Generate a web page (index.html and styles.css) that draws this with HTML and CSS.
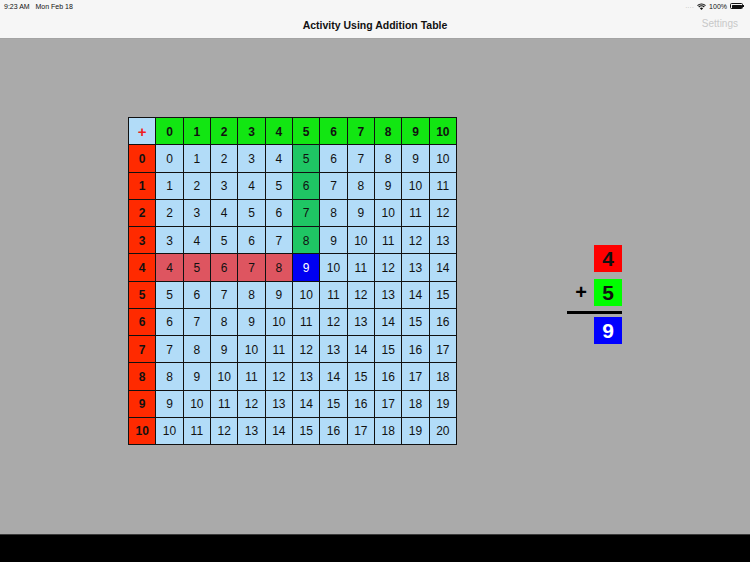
FILE: index.html
```html
<!DOCTYPE html>
<html>
<head>
<meta charset="utf-8">
<link rel="stylesheet" href="styles.css">
</head>
<body>
<div class="screen">
  <header class="topbar">
    <div class="status">
      <span class="time">9:23 AM&nbsp;&nbsp; Mon Feb 18</span>
      <span class="sys">
        <span class="dots">....</span>
        <svg class="wifi" width="9" height="7" viewBox="0 0 9 7"><path d="M4.5 7 L2.9 5.2 A2.4 2.4 0 0 1 6.1 5.2 Z" fill="#111"/><path d="M1.7 4 A4 4 0 0 1 7.3 4" stroke="#111" stroke-width="1.1" fill="none"/><path d="M0.5 2.6 A5.7 5.7 0 0 1 8.5 2.6" stroke="#111" stroke-width="1.1" fill="none"/></svg>
        <span class="pct">100%</span>
        <span class="battery"><span class="batfill"></span></span><span class="batnub"></span>
      </span>
    </div>
    <div class="navrow">
      <span class="title">Activity Using Addition Table</span>
      <span class="settings">Settings</span>
    </div>
  </header>
  <main class="stage">
    <div class="table">
      <div class="cell corner">+</div>
      <div class="cell top">0</div><div class="cell top">1</div><div class="cell top">2</div><div class="cell top">3</div><div class="cell top">4</div><div class="cell top">5</div><div class="cell top">6</div><div class="cell top">7</div><div class="cell top">8</div><div class="cell top">9</div><div class="cell top">10</div>

      <div class="cell side">0</div>
      <div class="cell">0</div><div class="cell">1</div><div class="cell">2</div><div class="cell">3</div><div class="cell">4</div><div class="cell col">5</div><div class="cell">6</div><div class="cell">7</div><div class="cell">8</div><div class="cell">9</div><div class="cell">10</div>

      <div class="cell side">1</div>
      <div class="cell">1</div><div class="cell">2</div><div class="cell">3</div><div class="cell">4</div><div class="cell">5</div><div class="cell col">6</div><div class="cell">7</div><div class="cell">8</div><div class="cell">9</div><div class="cell">10</div><div class="cell">11</div>

      <div class="cell side">2</div>
      <div class="cell">2</div><div class="cell">3</div><div class="cell">4</div><div class="cell">5</div><div class="cell">6</div><div class="cell col">7</div><div class="cell">8</div><div class="cell">9</div><div class="cell">10</div><div class="cell">11</div><div class="cell">12</div>

      <div class="cell side">3</div>
      <div class="cell">3</div><div class="cell">4</div><div class="cell">5</div><div class="cell">6</div><div class="cell">7</div><div class="cell col">8</div><div class="cell">9</div><div class="cell">10</div><div class="cell">11</div><div class="cell">12</div><div class="cell">13</div>

      <div class="cell side">4</div>
      <div class="cell row">4</div><div class="cell row">5</div><div class="cell row">6</div><div class="cell row">7</div><div class="cell row">8</div><div class="cell answer">9</div><div class="cell">10</div><div class="cell">11</div><div class="cell">12</div><div class="cell">13</div><div class="cell">14</div>

      <div class="cell side">5</div>
      <div class="cell">5</div><div class="cell">6</div><div class="cell">7</div><div class="cell">8</div><div class="cell">9</div><div class="cell">10</div><div class="cell">11</div><div class="cell">12</div><div class="cell">13</div><div class="cell">14</div><div class="cell">15</div>

      <div class="cell side">6</div>
      <div class="cell">6</div><div class="cell">7</div><div class="cell">8</div><div class="cell">9</div><div class="cell">10</div><div class="cell">11</div><div class="cell">12</div><div class="cell">13</div><div class="cell">14</div><div class="cell">15</div><div class="cell">16</div>

      <div class="cell side">7</div>
      <div class="cell">7</div><div class="cell">8</div><div class="cell">9</div><div class="cell">10</div><div class="cell">11</div><div class="cell">12</div><div class="cell">13</div><div class="cell">14</div><div class="cell">15</div><div class="cell">16</div><div class="cell">17</div>

      <div class="cell side">8</div>
      <div class="cell">8</div><div class="cell">9</div><div class="cell">10</div><div class="cell">11</div><div class="cell">12</div><div class="cell">13</div><div class="cell">14</div><div class="cell">15</div><div class="cell">16</div><div class="cell">17</div><div class="cell">18</div>

      <div class="cell side">9</div>
      <div class="cell">9</div><div class="cell">10</div><div class="cell">11</div><div class="cell">12</div><div class="cell">13</div><div class="cell">14</div><div class="cell">15</div><div class="cell">16</div><div class="cell">17</div><div class="cell">18</div><div class="cell">19</div>

      <div class="cell side">10</div>
      <div class="cell">10</div><div class="cell">11</div><div class="cell">12</div><div class="cell">13</div><div class="cell">14</div><div class="cell">15</div><div class="cell">16</div><div class="cell">17</div><div class="cell">18</div><div class="cell">19</div><div class="cell">20</div>
    </div>

    <div class="equation">
      <span class="op"></span><span class="box red">4</span>
      <span class="op plus">+</span><span class="box green">5</span>
      <span class="rule"></span>
      <span class="op"></span><span class="box blue">9</span>
    </div>
  </main>
  <footer class="bottom"></footer>
</div>
</body>
</html>
```

FILE: styles.css
```css
* { box-sizing: border-box; }
html, body { margin: 0; padding: 0; }
body {
  width: 750px;
  height: 562px;
  overflow: hidden;
  font-family: "Liberation Sans", Arial, sans-serif;
}
.screen {
  width: 750px;
  height: 562px;
  display: flex;
  flex-direction: column;
}
.topbar {
  height: 39px;
  background: #f6f6f6;
  border-bottom: 1px solid #a4a4a4;
  display: flex;
  flex-direction: column;
}
.status {
  height: 12px;
  display: flex;
  justify-content: space-between;
  align-items: center;
  padding: 0 6px 0 4px;
  font-size: 7px;
  color: #111;
}
.sys { display: flex; align-items: center; gap: 3px; }
.dots { color: #999; font-size: 6px; letter-spacing: 0.5px; }
.pct { font-size: 7px; }
.battery {
  width: 13px;
  height: 6px;
  border: 1px solid #111;
  border-radius: 1.5px;
  padding: 0.5px;
  display: flex;
}
.batfill { flex: 1; background: #111; border-radius: 0.5px; }
.batnub { width: 1px; height: 2px; background: #111; margin-left: -3px; }
.navrow {
  flex: 1;
  display: flex;
  align-items: center;
  justify-content: center;
  position: relative;
  padding-bottom: 1px;
}
.title {
  font-size: 10.5px;
  font-weight: bold;
  color: #111;
}
.settings {
  position: absolute;
  right: 12px;
  top: 6px;
  font-size: 10px;
  color: #c8c8c8;
}
.stage {
  flex: 1;
  background: #aaaaaa;
  display: flex;
  align-items: flex-start;
  padding: 78px 0 0 128px;
  border-bottom: 1px solid #3a3a3a;
}
.table {
  width: 329px;
  height: 328px;
  background: #111;
  padding: 1px;
  display: grid;
  grid-template-columns: repeat(12, 1fr);
  grid-template-rows: repeat(12, 1fr);
  gap: 1px;
}
.cell {
  background: #b2dcf8;
  display: flex;
  align-items: center;
  justify-content: center;
  font-size: 12px;
  color: #111;
  padding-top: 1px;
}
.corner { color: #f02020; font-size: 15px; font-weight: bold; }
.top { background: #12e612; font-weight: bold; }
.side { background: #ff2a00; font-weight: bold; }
.col { background: #1fc664; }
.row { background: #de5560; }
.answer { background: #0000f2; color: #fff; }
.equation {
  margin: 128px 0 0 110px;
  display: grid;
  grid-template-columns: 27px 28px;
  grid-auto-rows: auto;
}
.op {
  display: flex;
  align-items: center;
  justify-content: center;
  font-size: 20px;
  font-weight: bold;
  color: #000;
}
.plus { padding-left: 1px; }
.box {
  width: 28px;
  height: 27px;
  display: flex;
  align-items: center;
  justify-content: center;
  font-size: 21px;
  font-weight: bold;
  color: #111;
  padding-top: 1px;
}
.red { background: #ff0000; margin-bottom: 7px; }
.green { background: #00ff00; }
.blue { background: #0000ff; color: #fff; }
.rule {
  grid-column: 1 / 3;
  height: 3px;
  background: #000;
  margin: 5px 0 3px;
}
.bottom {
  height: 27px;
  background: #000;
}
```
